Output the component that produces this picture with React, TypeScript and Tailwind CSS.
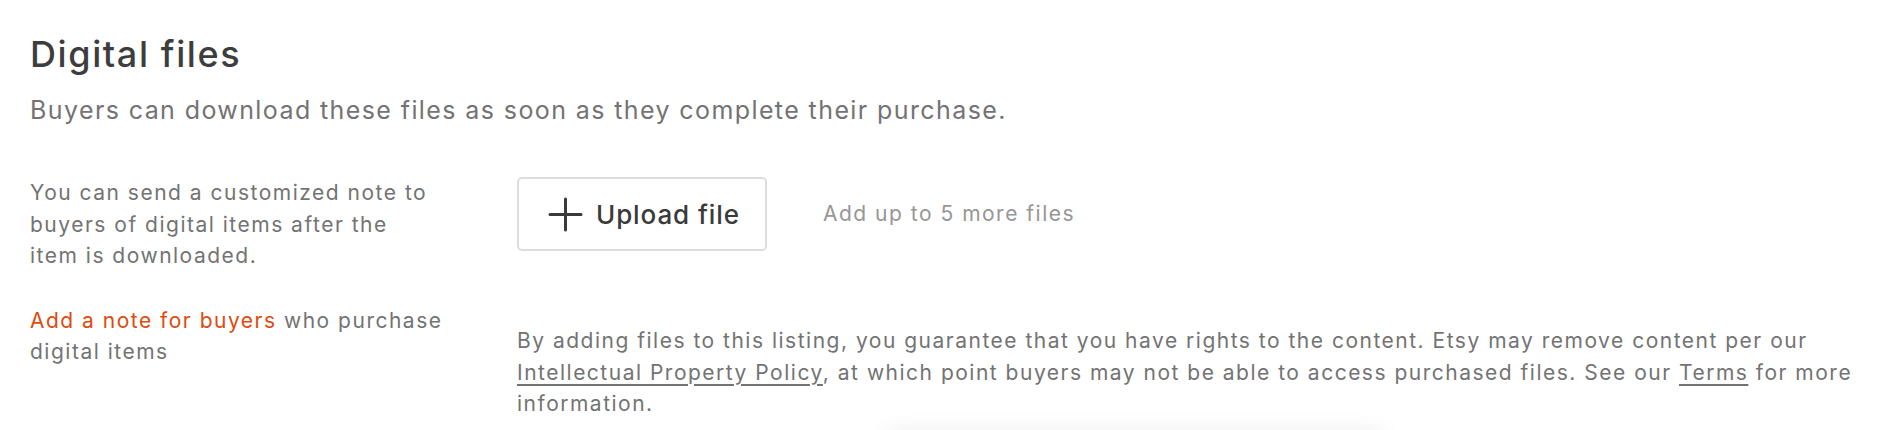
import React from "react";

function PlusIcon() {
  return (
    <svg width="35" height="35" viewBox="0 0 35 35" fill="none" aria-hidden="true">
      <path d="M17.5 2v31M2 17.5h31" stroke="#3a3a3a" strokeWidth="3" strokeLinecap="round" />
    </svg>
  );
}

export default function App() {
  return (
    <div
      className="relative h-[430px] w-full overflow-hidden bg-white px-[30px] pt-[32px]"
      style={{ fontFamily: "Inter, 'Noto Sans', sans-serif" }}
    >
      <h2 className="text-[36px] leading-[44px] font-medium text-[#3d3d3d] tracking-[1.6px]">
        Digital files
      </h2>
      <p className="mt-[18px] text-[25px] leading-[32px] text-[#737373] tracking-[1.4px]">
        Buyers can download these files as soon as they complete their purchase.
      </p>

      <div className="mt-[51px] grid grid-cols-[487px_1fr] tracking-[1.5px]">
        <div className="max-w-[444px] text-[21px] leading-[31.5px] text-[#737373]">
          <p>
            You can send a customized note to buyers of digital items after the
            <br />
            item is downloaded.
          </p>
          <p className="mt-[33px]">
            <a href="#" className="text-[#df4a0d]">
              Add a note for buyers
            </a>{" "}
            who purchase digital items
          </p>
        </div>

        <div>
          <div className="flex items-center">
            <button className="flex h-[74px] w-[250px] items-center gap-[13px] rounded-[5px] border-2 border-[#dcdcdc] bg-white pl-[29px]">
              <PlusIcon />
              <span className="text-[26px] font-medium text-[#3a3a3a] tracking-[0.9px]">Upload file</span>
            </button>
            <span className="ml-[56px] text-[21px] text-[#969696]">Add up to 5 more files</span>
          </div>

          <p className="mt-[74px] text-[21px] leading-[31.5px] text-[#737373]">
            By adding files to this listing, you guarantee that you have rights to the content. Etsy may remove
            content per our{" "}
            <a href="#" className="underline underline-offset-[4px]">
              Intellectual Property Policy
            </a>
            , at which point buyers may not be able to access purchased files. See our{" "}
            <a href="#" className="underline underline-offset-[4px]">
              Terms
            </a>{" "}
            for more information.
          </p>
        </div>
      </div>

      <div className="absolute left-[880px] top-[430px] h-[40px] w-[510px] rounded-[20px] bg-white shadow-[0_-4px_18px_rgba(0,0,0,0.05)]" />
    </div>
  );
}
